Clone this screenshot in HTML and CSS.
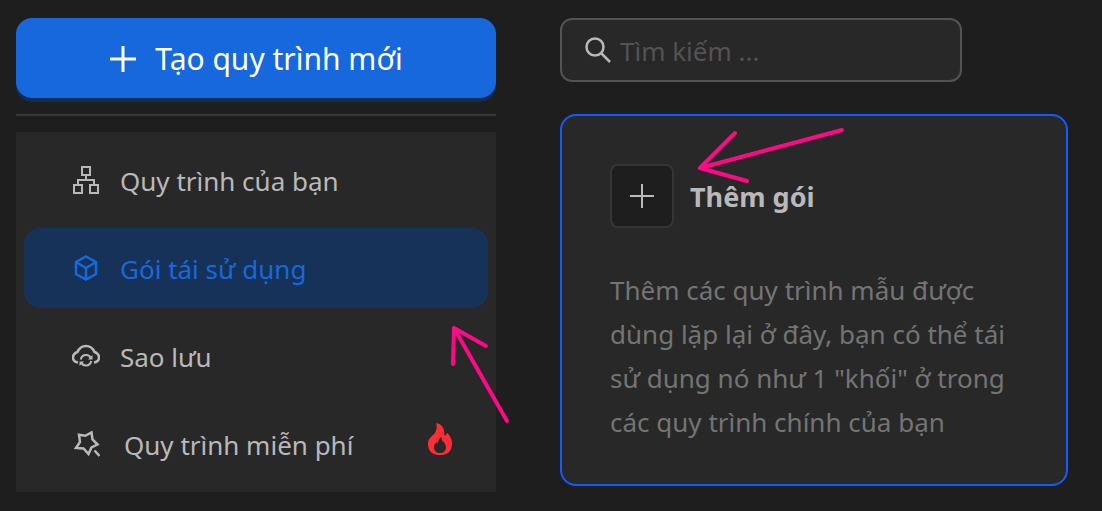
FILE: index.html
```html
<!DOCTYPE html>
<html lang="vi">
<head>
<meta charset="utf-8">
<meta name="viewport" content="width=device-width, initial-scale=1">
<title>Gói tái sử dụng</title>
<link rel="stylesheet" href="styles.css">
</head>
<body>
<div class="layout">
  <aside class="sidebar">
    <button class="create" type="button">
      <svg class="icon" viewBox="0 0 28 28" aria-hidden="true"><path d="M14 1v26M1 14h26"/></svg>
      <span>Tạo quy trình mới</span>
    </button>
    <hr class="divider">
    <nav class="menu">
      <a class="item" href="#workflows">
        <svg class="icon" viewBox="0 0 28 28" aria-hidden="true"><path d="M10 1h8v8h-8zM2 19h8v8H2zM18 19h8v8h-8zM14 9v5M6 19v-5h16v5"/></svg>
        <span>Quy trình của bạn</span>
      </a>
      <a class="item active" href="#packages" aria-current="page">
        <svg class="icon" viewBox="0 0 28 28" aria-hidden="true"><path d="M14 2.500 24 8v12l-10 5.500L4 20V8zM4 8l10 6 10-6M14 14v11"/></svg>
        <span>Gói tái sử dụng</span>
        <svg class="arrow arrow-up" viewBox="0 0 62 104" aria-hidden="true"><path d="M58 98 5 5M4 41 5 5l32 18"/></svg>
      </a>
      <a class="item item-backup" href="#backup">
        <svg class="icon" viewBox="0 0 28 28" aria-hidden="true"><path d="M6 20.500C3 20 1 18 1 15.500c0-2.500 1.500-4.500 4.500-5.500C7 6.500 10 4 14 4s7 2.500 8.500 6c3 1 4.500 3 4.500 5.500 0 2.500-2 4.500-5 5"/><path class="thin" d="M8.800 17.500a5.300 5.300 0 0 1 10-1.500M19.200 19a5.300 5.300 0 0 1-10 1.500"/><path class="tip" d="M20.500 13v4.500H16zM7.500 24v-4.500H12z"/></svg>
        <span>Sao lưu</span>
      </a>
      <a class="item item-free" href="#free">
        <svg class="icon" viewBox="0 0 28 28" aria-hidden="true"><path d="M7 4.800 13.300 5.800 19.500 2.500l1 7 5 5-6 3L16.500 24 11.500 18.500l-7.500-.5L8 12zM22.500 20.500l5 5.500"/></svg>
        <span>Quy trình miễn phí</span>
        <svg class="fire" viewBox="84 369 72 96" aria-hidden="true"><path fill-rule="evenodd" d="M109 369C124 372 133 384 133 398L133 407C137 406 140 402 141 398C151 406 156 418 156 431C156 453 143 465 120 465C97 465 84 453 84 431C84 409 102 409 108 392C111 384 110 376 109 369ZM124 411C118 414 113 422 114 432L111 426C105 429 102 435 102 441C102 453 110 459 120 459C130 459 138 453 138 441C138 427 124 426 124 411Z"/></svg>
      </a>
    </nav>
  </aside>
  <main class="content">
    <label class="search">
      <svg class="search-icon" viewBox="0 0 32 32" aria-hidden="true"><circle cx="13" cy="13" r="8.500"/><path d="m19 19 9 9"/></svg>
      <input type="search" placeholder="Tìm kiếm ..." aria-label="Tìm kiếm">
    </label>
    <section class="card">
      <div class="card-head">
        <button class="add" type="button" aria-label="Thêm gói">
          <svg class="add-icon" viewBox="0 0 24 24" aria-hidden="true"><path d="M12 0v24M0 12h24"/></svg>
        </button>
        <h2 class="title">Thêm gói</h2>
      </div>
      <p class="text">Thêm các quy trình mẫu được dùng lặp lại ở đây, bạn có thể tái sử dụng nó như 1 "khối" ở trong các quy trình chính của bạn</p>
      <svg class="arrow arrow-left" viewBox="0 0 150 60" aria-hidden="true"><path d="M146 6 4 44M39 9 4 44l47 13"/></svg>
    </section>
  </main>
</div>
</body>
</html>
```
FILE: styles.css
```css
* { box-sizing: border-box; }

body {
  margin: 0;
  min-height: 100vh;
  background: #1e1e1e;
  color: #b9b9b9;
  font: 26px/44px "Noto Sans", "Open Sans", sans-serif;
}

button, input { font: inherit; }

svg {
  flex: none;
  fill: none;
  stroke: currentColor;
  stroke-width: 2;
}

.layout {
  display: grid;
  grid-template-columns: 480fr 508fr;
  column-gap: 64px;
  padding: 18px 34px 18px 16px;
}

.create {
  display: flex;
  align-items: center;
  justify-content: center;
  gap: 18px;
  width: 100%;
  height: 80px;
  padding: 2px 0 0;
  border: 0;
  border-radius: 16px;
  background: #1768dc;
  box-shadow: 0 4px 0 #112d55;
  color: #fff;
  font-size: 30px;
}

.create .icon { stroke-width: 3; }

.icon { width: 28px; height: 28px; }

.active .icon, .item-backup .icon, .item-free .icon { stroke-width: 2.5; }

.icon .thin { stroke-width: 2; }

.icon .tip { fill: currentColor; stroke: none; }

.divider {
  height: 2px;
  margin: 16px 0;
  border: 0;
  background: #383838;
}

.menu {
  display: grid;
  gap: 8px;
  padding: 8px;
  background: #282828;
}

.item {
  position: relative;
  display: flex;
  align-items: center;
  gap: 20px;
  height: 80px;
  padding: 0 36px 0 48px;
  border-radius: 16px;
  color: inherit;
  text-decoration: none;
}

.item span { padding-top: 2px; }

.item-free { gap: 24px; }

.item.active {
  background: #163259;
  color: #1768dc;
}

.fire {
  width: 24px;
  height: 32px;
  margin: 0 0 10px auto;
  fill: #ff2d36;
  stroke: none;
}

.search {
  display: flex;
  align-items: center;
  gap: 6px;
  width: calc(80% - 4px);
  height: 64px;
  padding: 0 20px;
  border: 2px solid #535353;
  border-radius: 12px;
  background: #282828;
}

.search-icon {
  width: 32px;
  height: 32px;
  stroke-width: 2.5;
}

.search input {
  flex: 1;
  min-width: 0;
  padding: 2px 0 0;
  border: 0;
  outline: 0;
  background: none;
  color: inherit;
}

.search input::placeholder { color: #535353; opacity: 1; }

.card {
  position: relative;
  margin-top: 32px;
  padding: 48px 48px 40px;
  border: 2px solid #145cff;
  border-radius: 16px;
  background: #282828;
}

.card-head {
  display: flex;
  align-items: center;
  gap: 16px;
}

.add {
  display: grid;
  place-items: center;
  width: 64px;
  height: 64px;
  padding: 0;
  border: 2px solid #353535;
  border-radius: 8px;
  background: #1e1e1e;
  color: #b9b9b9;
}

.add-icon { width: 24px; height: 24px; }

.title {
  margin: 0;
  padding-top: 2px;
  font-size: 27px;
  font-weight: 700;
}

.text {
  margin: 40px 0 0;
  color: #747474;
}

.arrow {
  position: absolute;
  z-index: 1;
}

.card .arrow, .item .arrow {
  stroke: #ff0a86;
  stroke-width: 4;
  stroke-linecap: round;
  stroke-linejoin: round;
}

.arrow-up {
  top: 95px;
  right: -23px;
  width: 62px;
  height: 104px;
}

.arrow-left {
  top: 8px;
  left: 134px;
  width: 150px;
  height: 60px;
}
```
